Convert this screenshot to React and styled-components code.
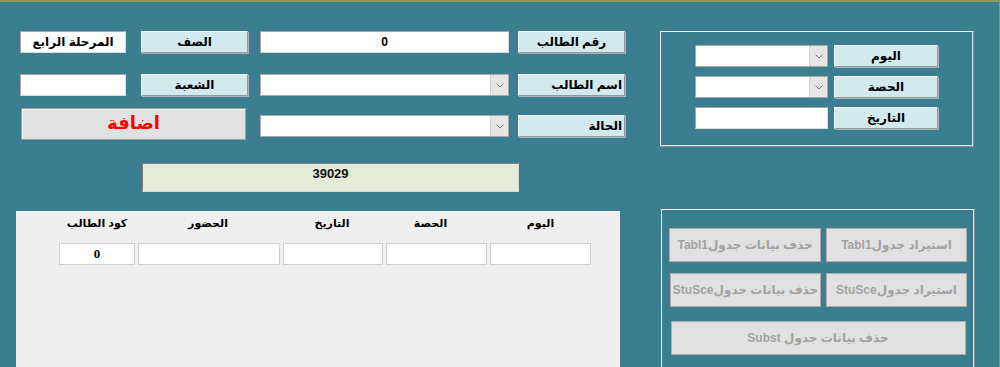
import React from 'react';
import styled, { createGlobalStyle } from 'styled-components';

const GlobalStyle = createGlobalStyle`
  html, body {
    margin: 0;
    padding: 0;
    overflow: hidden;
  }
  body {
    font-family: "Liberation Sans", "DejaVu Sans", sans-serif;
  }
`;

const Page = styled.div`
  width: 1000px;
  height: 367px;
  box-sizing: border-box;
  background: #3a7e8f;
  border-top: 2px solid #8c9a5a;
  border-right: 1px solid #7f9a78;
  padding-top: 29px;
  overflow: hidden;
  display: flex;
  flex-direction: column;
`;

const TopSection = styled.div`
  display: flex;
  align-items: flex-start;
  height: 161px;
`;

const StudentForm = styled.div`
  margin-left: 20px;
  display: grid;
  grid-template-columns: 121px 119px 258px 108px;
  grid-template-rows: 43px 34px 55px 29px;
`;

const Label = styled.div`
  box-sizing: border-box;
  width: ${(p) => p.$w || 107}px;
  height: 22px;
  background: #d2e9f0;
  border: 1px solid;
  border-color: #f4f9fb #8f9a9d #8f9a9d #f4f9fb;
  box-shadow: 1px 1px 0 #a9b3b6;
  font-size: 12px;
  font-weight: bold;
  color: #000;
  direction: rtl;
  display: flex;
  align-items: center;
  justify-content: ${(p) => (p.$right ? 'flex-start' : 'center')};
  padding: 0 2px 1px;
  align-self: start;
  margin-top: ${(p) => p.$top || 0}px;
`;

const TextBox = styled.div`
  box-sizing: border-box;
  width: ${(p) => p.$w}px;
  height: 22px;
  background: #fff;
  border: 1px solid;
  border-color: #a3a3a3 #dcdcdc #dcdcdc #a3a3a3;
  font-size: 12px;
  font-weight: bold;
  color: #000;
  direction: rtl;
  display: flex;
  align-items: center;
  justify-content: center;
  padding-bottom: 1px;
`;

const ComboBox = styled.div`
  box-sizing: border-box;
  width: ${(p) => p.$w}px;
  height: 22px;
  background: #fff;
  border: 1px solid #a8a8a8;
  display: flex;
  justify-content: flex-end;
  margin-top: ${(p) => p.$top || 0}px;
`;

const DropButton = styled.div`
  width: 17px;
  height: 100%;
  background: #e6e6e6;
  border-left: 1px solid #d0d0d0;
  display: flex;
  align-items: center;
  justify-content: center;
`;

const AddButton = styled.button`
  box-sizing: border-box;
  grid-column: 1 / 3;
  width: 225px;
  height: 32px;
  margin: 0 0 0 1px;
  background: #e1e1e1;
  border: 1px solid #a0a0a0;
  box-shadow: inset 1px 1px 0 #f5f5f5;
  color: #ff0000;
  font-family: "DejaVu Sans", sans-serif;
  font-size: 18px;
  font-weight: bold;
  padding: 0 0 4px;
  direction: rtl;
`;

const CounterBox = styled.div`
  box-sizing: border-box;
  grid-column: 2 / 4;
  margin-left: 1px;
  width: 377px;
  height: 29px;
  background: #e4ebd6;
  border: 1px solid;
  border-color: #7d7d7d #d8dccf #d8dccf #7d7d7d;
  font-size: 13px;
  font-weight: bold;
  text-align: center;
  padding-top: 2px;
  color: #111;
`;

const GroupBox = styled.div`
  box-sizing: border-box;
  width: ${(p) => p.$w}px;
  height: ${(p) => (p.$h ? `${p.$h}px` : 'auto')};
  margin-left: ${(p) => p.$left}px;
  border: 1px solid;
  border-color: #f2f2f2 #8a8a8a #8a8a8a #f2f2f2;
  box-shadow: inset -1px -1px 0 #e0e6e8;
`;

const ScheduleGrid = styled.div`
  display: grid;
  grid-template-columns: 133px 104px;
  column-gap: 6px;
  row-gap: 9px;
  padding: 13px 0 0 34px;
`;

const BottomSection = styled.div`
  display: flex;
  align-items: flex-start;
  flex: 1;
  margin-top: 17px;
`;

const RecordPanel = styled.div`
  width: 604px;
  height: 160px;
  margin: 2px 0 0 16px;
  background: #efefef;
  display: grid;
  grid-template-columns: 76px 142px 100px 101px 101px;
  grid-template-rows: 21px 22px;
  column-gap: 3px;
  row-gap: 9px;
  align-content: start;
  padding: 2px 0 0 43px;
  box-sizing: border-box;
`;

const ColumnHead = styled.div`
  font-size: 11px;
  font-weight: bold;
  text-align: center;
  align-self: center;
  color: #000;
  direction: rtl;
  transform: translateX(${(p) => p.$shift || 0}px);
`;

const Cell = styled.div`
  box-sizing: border-box;
  height: 22px;
  background: #fff;
  border: 1px solid #cfcfcf;
  font-size: 13px;
  font-weight: bold;
  font-family: "Liberation Serif", serif;
  display: flex;
  align-items: center;
  justify-content: center;
`;

const ToolGrid = styled.div`
  display: grid;
  grid-template-columns: 152px 141px;
  column-gap: 5px;
  row-gap: 11px;
  padding: 18px 0 0 7px;
`;

const ToolButton = styled.button`
  box-sizing: border-box;
  height: 34px;
  width: ${(p) => p.$w || 'auto'};
  grid-column: ${(p) => (p.$wide ? '1 / 3' : 'auto')};
  justify-self: ${(p) => (p.$wide ? 'center' : 'stretch')};
  margin: ${(p) => (p.$wide ? '3px 0 0' : '0')};
  margin-left: ${(p) => p.$nudge || 0}px;
  background: #e1e1e1;
  border: 1px solid #adadad;
  color: #a2a2a2;
  font-family: "Liberation Sans", "DejaVu Sans", sans-serif;
  font-size: 12px;
  font-weight: bold;
  direction: rtl;
  white-space: nowrap;
  padding: 0 1px;
`;

const Chevron = () => (
  <svg width="8" height="5" viewBox="0 0 8 5">
    <path d="M0.5 0.5 L4 4 L7.5 0.5" fill="none" stroke="#7a7a7a" strokeWidth="1" />
  </svg>
);

const Combo = ({ w, top }) => (
  <ComboBox $w={w} $top={top}>
    <DropButton>
      <Chevron />
    </DropButton>
  </ComboBox>
);

const headers = [
  { text: 'كود الطالب', shift: 0 },
  { text: 'الحضور', shift: -1 },
  { text: 'التاريخ', shift: -1 },
  { text: 'الحصة', shift: -6 },
  { text: 'اليوم', shift: 0 },
];

const App = () => (
  <>
    <GlobalStyle />
    <Page>
      <TopSection>
        <StudentForm>
          <TextBox $w={106}>المرحلة الرابع</TextBox>
          <Label>الصف</Label>
          <TextBox $w={249}>0</TextBox>
          <Label>رقم الطالب</Label>

          <TextBox $w={106}></TextBox>
          <Label>الشعبة</Label>
          <Combo w={249} />
          <Label $right>اسم الطالب</Label>

          <AddButton>اضافة</AddButton>
          <Combo w={249} top={7} />
          <Label $right $top={7}>الحالة</Label>

          <span />
          <CounterBox>39029</CounterBox>
        </StudentForm>

        <GroupBox $w={314} $h={116} $left={34}>
          <ScheduleGrid>
            <Combo w={133} />
            <Label $w={104}>اليوم</Label>
            <Combo w={133} />
            <Label $w={104}>الحصة</Label>
            <TextBox $w={133}></TextBox>
            <Label $w={104}>التاريخ</Label>
          </ScheduleGrid>
        </GroupBox>
      </TopSection>

      <BottomSection>
        <RecordPanel>
          {headers.map((h) => (
            <ColumnHead key={h.text} $shift={h.shift}>
              {h.text}
            </ColumnHead>
          ))}
          <Cell>0</Cell>
          <Cell />
          <Cell />
          <Cell />
          <Cell />
        </RecordPanel>

        <GroupBox $w={314} $h={170} $left={41}>
          <ToolGrid>
            <ToolButton>حذف بيانات جدولTabl1</ToolButton>
            <ToolButton>استيراد جدولTabl1</ToolButton>
            <ToolButton $nudge={1}>حذف بيانات جدولStuSce</ToolButton>
            <ToolButton>استيراد جدولStuSce</ToolButton>
            <ToolButton $wide $w="295px">حذف بيانات جدول Subst</ToolButton>
          </ToolGrid>
        </GroupBox>
      </BottomSection>
    </Page>
  </>
);

export default App;
